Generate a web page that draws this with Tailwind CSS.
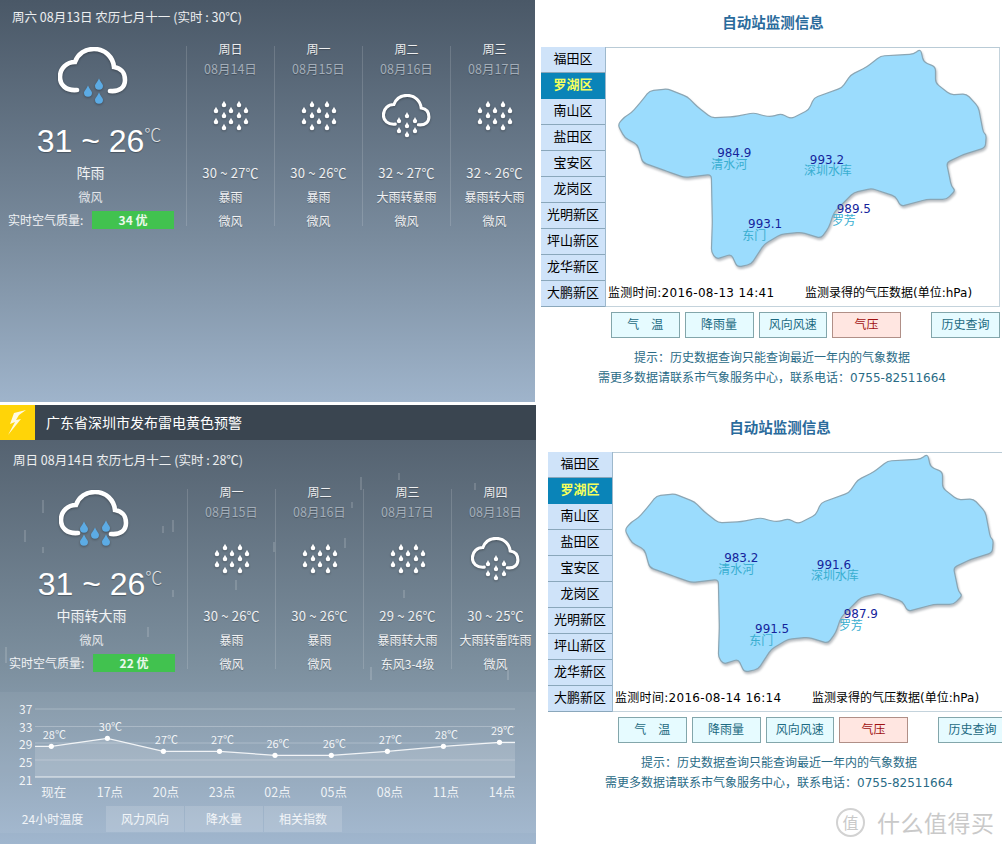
<!DOCTYPE html>
<html lang="zh-CN">
<head>
  <meta charset="UTF-8" />
  <title>深圳天气</title>
  <script src="https://cdn.jsdelivr.net/npm/@tailwindcss/browser@4"></script>
</head>
<body class="bg-white">
  <div class="relative w-[1002px] h-[844px] overflow-hidden font-['Noto_Sans_CJK_SC','Noto_Sans',sans-serif]">
    <div class="flex h-[402px]">
      <div id="weather-top" class="w-[535px] shrink-0 overflow-hidden bg-linear-to-b from-[#4a5867] via-[#7a8c9e] via-60% to-[#9fb4cb]"></div>
      <div id="station-top" class="pl-[6px]"></div>
    </div>
    <div class="flex h-[439px] mt-[3px]">
      <div class="relative w-[536px] shrink-0 overflow-hidden bg-linear-to-b from-[#4f5c6a] via-[#7d909f] via-60% to-[#a0b6ce]">
        <div class="flex items-center h-[35px] bg-[#3a4550]">
          <div class="w-[35px] h-[35px] bg-[#ffd408]">
            <svg width="35" height="35" viewBox="0 0 35 35"><polygon points="26,5 14,8 10,19 15,17 8,30 21,14 16,15 19,10" fill="#fff" fill-opacity=".88"/></svg>
          </div>
          <div class="ml-[11px] text-[14px] text-white">广东省深圳市发布雷电黄色预警</div>
        </div>
        <div id="weather-bottom" class="relative pl-[1px] pt-[3px] h-[252px]"></div>
        <div class="bg-white/5 h-[141px]">
          <svg id="chart" width="536" height="114" viewBox="0 692 536 114" class="block"></svg>
          <div class="flex gap-[1px] h-[26px] text-[12px] text-white/85">
            <div class="w-[105px] flex items-center justify-center">24小时温度</div>
            <div class="w-[78px] flex items-center justify-center bg-white/15">风力风向</div>
            <div class="w-[78px] flex items-center justify-center bg-white/15">降水量</div>
            <div class="w-[78px] flex items-center justify-center bg-white/15">相关指数</div>
          </div>
        </div>
        <div id="streaks"></div>
      </div>
      <div id="station-bottom" class="pl-[12px]"></div>
    </div>

    <div class="absolute left-[836px] top-[805px] flex items-center text-[#c9c9c9]">
      <div class="w-[29px] h-[29px] rounded-full border-2 border-[#d2d2d2] flex items-center justify-center text-[16px]">值</div>
      <div class="ml-[12px] text-[23px] tracking-[0.5px]">什么值得买</div>
    </div>
  </div>

  <script>
    const cloud = 'M19 43C8 44 2 38 2 30C2 21 9 15 17 15C20 7 27 2 36 2C47 2 55 10 56 20C63 21 67 26 67 33C67 40 62 45 52 44';

    function drop(x, y, w, color) {
      const h = w * 1.4;
      return `<path d="M${x} ${y - h / 2}C${x + w * .2} ${y - h * .15} ${x + w / 2} ${y} ${x + w / 2} ${y + h * .16}A${w / 2} ${w / 2} 0 0 1 ${x - w / 2} ${y + h * .16}C${x - w / 2} ${y} ${x - w * .2} ${y - h * .15} ${x} ${y - h / 2}Z" fill="${color}"/>`;
    }

    function bigIcon(drops) {
      return `<svg width="70" height="58" viewBox="0 0 70 58" class="drop-shadow-[0_1px_1px_rgba(0,0,0,.3)]">
        <path d="${cloud}" fill="none" stroke="#fff" stroke-width="4.6" stroke-linecap="round"/>
        ${drops.map(d => drop(d[0], d[1], 8, '#5cabe4')).join('')}
      </svg>`;
    }

    function rainIcon() {
      const pts = [[13, 6], [28, 6], [5, 12], [20, 12], [35, 12], [13, 17], [28, 17], [5, 23], [20, 23], [35, 23], [13, 29], [28, 29]];
      return `<svg width="40" height="36" viewBox="0 0 40 36" class="drop-shadow-[0_1px_1px_rgba(0,0,0,.3)]">${pts.map(p => drop(p[0], p[1], 4.6, '#fff')).join('')}</svg>`;
    }

    function cloudRainIcon() {
      const pts = [[25, 21], [17, 26], [33, 26], [25, 31], [17, 36], [33, 36], [25, 40]];
      return `<svg width="49" height="45" viewBox="0 0 49 45" class="drop-shadow-[0_1px_1px_rgba(0,0,0,.3)]">
        <g transform="scale(.7)"><path d="${cloud}" fill="none" stroke="#fff" stroke-width="4.4" stroke-linecap="round"/></g>
        ${pts.map(p => drop(p[0], p[1], 4.4, '#fff')).join('')}
      </svg>`;
    }

    function dayCol(d) {
      return `<div class="w-[88px] h-[180px] mt-[7px] shrink-0 border-l border-white/15">
        <div class="-mt-[7px] text-center text-[12px] text-white/90 [text-shadow:0_1px_1px_rgba(0,0,0,.25)]">
          <div class="h-[20px] leading-[20px]">${d.week}</div>
          <div class="h-[20px] leading-[20px] text-[12.5px] text-[#a3aeb9]">${d.date}</div>
          <div class="h-[82px] pb-[8px] flex items-center justify-center">${d.icon}</div>
          <div class="h-[24px] leading-[24px] text-[13px] tracking-[0.2px]">${d.temp}</div>
          <div class="h-[24px] leading-[24px] whitespace-nowrap">${d.text}</div>
          <div class="h-[23px] leading-[23px]">${d.wind}</div>
        </div>
      </div>`;
    }

    function weather(w) {
      return `<div class="h-[35px] pl-[12px] flex items-center text-[12.5px] text-white/90 whitespace-nowrap">${w.head}</div>
      <div class="flex mt-[4px]">
        <div class="w-[186px] shrink-0 text-white">
          <div class="h-[69px] pl-[58px] pt-[8px]">${w.icon}</div>
          <div class="h-[44px] mt-[11px] flex items-start justify-center pl-[12px] [text-shadow:0_1px_1px_rgba(0,0,0,.3)]">
            <span class="font-['Liberation_Sans',sans-serif] text-[32px] leading-[44px] whitespace-nowrap">31 ~ 26</span><span class="text-[17px] font-light leading-[30px] text-white/80">℃</span>
          </div>
          <div class="h-[22px] -mt-[2px] leading-[22px] text-center text-[14px] text-white/90 pr-[5px]">${w.text}</div>
          <div class="h-[24px] mt-[2px] leading-[24px] text-center text-[12px] text-white/80 pr-[5px]">微风</div>
          <div class="flex items-center mt-[2px] pl-[8px] text-[12px] text-white/90 whitespace-nowrap">
            <span class="w-[84px]">实时空气质量:</span>
            <span class="w-[82px] h-[18px] leading-[18px] bg-[#41c24f] text-center font-bold text-[12px]">${w.aqi}</span>
          </div>
        </div>
        ${w.days.map(dayCol).join('')}
      </div>`;
    }

    document.getElementById('weather-top').innerHTML = weather({
      head: '周六 08月13日 农历七月十一 (实时 : 30℃)',
      icon: bigIcon([[30, 44], [41, 37], [41, 51]]),
      text: '阵雨',
      aqi: '34 优',
      days: [
        { week: '周日', date: '08月14日', icon: rainIcon(), temp: '30 ~ 27℃', text: '暴雨', wind: '微风' },
        { week: '周一', date: '08月15日', icon: rainIcon(), temp: '30 ~ 26℃', text: '暴雨', wind: '微风' },
        { week: '周二', date: '08月16日', icon: cloudRainIcon(), temp: '32 ~ 27℃', text: '大雨转暴雨', wind: '微风' },
        { week: '周三', date: '08月17日', icon: rainIcon(), temp: '32 ~ 26℃', text: '暴雨转大雨', wind: '微风' }
      ]
    });

    document.getElementById('weather-bottom').innerHTML = weather({
      head: '周日 08月14日 农历七月十二 (实时 : 28℃)',
      icon: bigIcon([[25, 37], [47, 36], [36, 43], [25, 50], [47, 50]]),
      text: '中雨转大雨',
      aqi: '22 优',
      days: [
        { week: '周一', date: '08月15日', icon: rainIcon(), temp: '30 ~ 26℃', text: '暴雨', wind: '微风' },
        { week: '周二', date: '08月16日', icon: rainIcon(), temp: '30 ~ 26℃', text: '暴雨', wind: '微风' },
        { week: '周三', date: '08月17日', icon: rainIcon(), temp: '29 ~ 26℃', text: '暴雨转大雨', wind: '东风3-4级' },
        { week: '周四', date: '08月18日', icon: cloudRainIcon(), temp: '30 ~ 25℃', text: '大雨转雷阵雨', wind: '微风' }
      ]
    });

    // rain streaks over the lower panel, page x / y / length, panel starts at y 405
    const streaks = [[42, 500, 13], [24, 530, 12], [172, 520, 12], [162, 526, 7], [42, 547, 6], [172, 590, 7], [147, 627, 10], [5, 647, 16], [235, 580, 10], [360, 477, 13], [398, 473, 7], [474, 483, 7], [273, 542, 10], [344, 538, 10], [403, 590, 8], [370, 667, 13], [507, 670, 10], [351, 502, 6]];
    document.getElementById('streaks').innerHTML = streaks.map(s =>
      `<div class="absolute w-[2px] bg-white/15" style="left:${s[0]}px;top:${s[1] - 405}px;height:${s[2]}px"></div>`).join('');

    // 24h temperature chart
    const pts = [[51.3, 746.3, '28℃', '现在'], [107.4, 738.3, '30℃', '17点'], [163.4, 751.3, '27℃', '20点'], [219.5, 751.3, '27℃', '23点'], [275, 755.3, '26℃', '02点'], [331.3, 755.3, '26℃', '05点'], [387.4, 751.3, '27℃', '08点'], [443.4, 746.3, '28℃', '11点'], [499.5, 742.3, '29℃', '14点']];
    const line = '35,746.3 ' + pts.map(p => p[0] + ',' + p[1]).join(' ') + ' 515,742.3';
    document.getElementById('chart').innerHTML = `
      ${[[37, 709], [33, 726.5], [29, 743], [25, 760]].map(r => `<line x1="35" x2="515" y1="${r[1]}" y2="${r[1]}" stroke="#fff" stroke-opacity=".25"/>`).join('')}
      <line x1="35" x2="515" y1="777" y2="777" stroke="#fff" stroke-opacity=".8"/>
      <polygon points="${line} 515,777 35,777" fill="#fff" fill-opacity=".14"/>
      <polyline points="${line}" fill="none" stroke="#fff" stroke-opacity=".85" stroke-width="1.3"/>
      ${[[37, 714], [33, 732], [29, 749], [25, 767], [21, 785]].map(r => `<text x="19" y="${r[1]}" text-anchor="start" font-size="12" fill="#fff" fill-opacity=".9">${r[0]}</text>`).join('')}
      ${pts.map(p => `<circle cx="${p[0]}" cy="${p[1]}" r="2.6" fill="#fff"/>
        <text x="${p[0] + 3}" y="${p[1] - 7}" text-anchor="middle" font-size="11" fill="#fff" fill-opacity=".9">${p[2]}</text>
        <text x="${p[0] + 2.5}" y="797" text-anchor="middle" font-size="12.5" fill="#fff" fill-opacity=".85">${p[3]}</text>`).join('')}
    `;

    // Shenzhen outline, traced by hand; corners rounded just a little
    const outline = [[618, 125], [625, 117], [632, 113], [643, 100], [650, 91], [668, 89], [688, 97], [698, 107], [712, 118], [735, 117], [755, 113], [764, 116], [772, 117], [782, 114], [792, 119], [810, 110], [815, 98], [843, 88], [852, 75], [868, 67], [882, 56], [902, 55], [915, 54], [922, 49], [925, 62], [937, 67], [937, 83], [952, 95], [968, 94], [980, 107], [985, 133], [988, 135], [987, 148], [965, 155], [948, 163], [953, 187], [957, 191], [948, 200], [928, 200], [902, 207], [897, 197], [873, 189], [855, 193], [835, 213], [830, 228], [822, 239], [802, 233], [782, 235], [765, 245], [752, 265], [738, 268], [732, 255], [717, 260], [712, 253], [713, 223], [712, 175], [685, 178], [668, 172], [643, 163], [638, 145], [625, 138]];
    function toward(a, b, dist) {
      const len = Math.hypot(b[0] - a[0], b[1] - a[1]);
      const t = Math.min(dist / len, .5);
      return [a[0] + (b[0] - a[0]) * t, a[1] + (b[1] - a[1]) * t];
    }
    let mapPath = '';
    outline.forEach((p, i) => {
      const prev = outline[(i + outline.length - 1) % outline.length];
      const next = outline[(i + 1) % outline.length];
      const a = toward(p, prev, 4), b = toward(p, next, 4);
      mapPath += `${i === 0 ? 'M' : 'L'}${a[0]} ${a[1]}Q${p[0]} ${p[1]} ${b[0]} ${b[1]}`;
    });
    mapPath += 'Z';

    const districts = ['福田区', '罗湖区', '南山区', '盐田区', '宝安区', '龙岗区', '光明新区', '坪山新区', '龙华新区', '大鹏新区'];

    function station(s) {
      const labels = [[735, 153, s.values[0]], [828, 160, s.values[1]], [855, 210, s.values[2]], [766, 225, s.values[3]]];
      const names = [[730, 165, '清水河'], [829, 171, '深圳水库'], [845, 222, '罗芳'], [755, 237, '东门']];
      return `<div class="w-[459px] font-['DejaVu_Sans','Noto_Sans_CJK_SC',sans-serif]">
        <div class="h-[47px] pl-[5px] flex items-center justify-center text-[14.5px] font-bold text-[#2a6b9c]">自动站监测信息</div>
        <div class="flex h-[260px] border-t border-[#b9cbd6]">
          <div class="w-[65px] -mt-[1px] shrink-0 border-r border-[#9db8cc] text-[13px] text-black">
            ${districts.map((d, i) => i === 1
              ? `<div class="h-[26px] leading-[24px] text-center font-bold text-[#f6ff5c] bg-[#0a84b8]">${d}</div>`
              : `<div class="h-[26px] leading-[24px] text-center bg-[#cfe3f9] border-b border-[#8aa7bb]">${d}</div>`).join('')}
          </div>
          <div class="flex-1 flex flex-col border-r border-b border-[#c4d3dc]">
            <svg width="393" height="232" viewBox="607 48 393 232" class="block">
              <path d="${mapPath}" fill="#9bdcfd" stroke="#8ba6b4" stroke-width="1.2" stroke-linejoin="round" class="drop-shadow-[1px_2px_1px_rgba(80,90,100,.4)]"/>
              ${labels.map(l => `<text x="${l[0]}" y="${l[1] + 4}" text-anchor="middle" font-size="12" fill="#14249c">${l[2]}</text>`).join('')}
              ${names.map(l => `<text x="${l[0]}" y="${l[1] + 4}" text-anchor="middle" font-size="12" fill="#39aed0">${l[2]}</text>`).join('')}
            </svg>
            <div class="flex items-center h-[27px] text-[12px] text-black whitespace-nowrap">
              <span class="w-[199px] pl-[2px] tracking-[0.3px]">监测时间:${s.time}</span><span>监测录得的气压数据(单位:hPa)</span>
            </div>
          </div>
        </div>
        <div class="flex gap-[5px] mt-[5px] ml-[70px] h-[26px] text-[12px] text-[#1c6a82] whitespace-nowrap">
          <div class="w-[69px] flex items-center justify-center bg-[#e6fbff] border border-[#83a6ab]">气　温</div>
          <div class="w-[69px] flex items-center justify-center bg-[#e6fbff] border border-[#83a6ab]">降雨量</div>
          <div class="w-[69px] flex items-center justify-center bg-[#e6fbff] border border-[#83a6ab]">风向风速</div>
          <div class="w-[69px] flex items-center justify-center bg-[#ffe6e1] border border-[#b08f87] text-[#a01010]">气压</div>
          <div class="w-[69px] ml-[25px] shrink-0 flex items-center justify-center bg-[#e6fbff] border border-[#83a6ab]">历史查询</div>
        </div>
        <div class="mt-[10px] pl-[3px] text-center text-[12px] text-[#2a6b86] whitespace-nowrap">
          <div class="h-[20px] leading-[20px]">提示：历史数据查询只能查询最近一年内的气象数据</div>
          <div class="h-[20px] leading-[20px]">需更多数据请联系市气象服务中心，联系电话：0755-82511664</div>
        </div>
      </div>`;
    }

    document.getElementById('station-top').innerHTML = station({ values: ['984.9', '993.2', '989.5', '993.1'], time: '2016-08-13 14:41' });
    document.getElementById('station-bottom').innerHTML = station({ values: ['983.2', '991.6', '987.9', '991.5'], time: '2016-08-14 16:14' });
  </script>
</body>
</html>
